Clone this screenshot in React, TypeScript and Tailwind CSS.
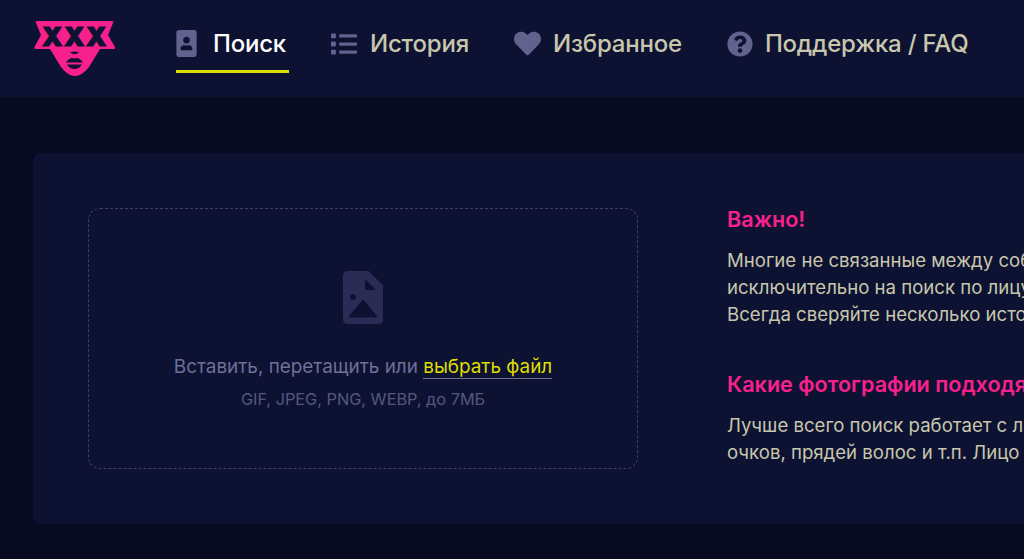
import React from 'react';
import { FaPortrait, FaList, FaHeart, FaQuestionCircle } from 'react-icons/fa';

const Logo = () => (
  <svg width="81" height="56" viewBox="0 0 81 56" className="shrink-0">
    <path
      d="M3 0H78Q80 0 79 2L74 14L81 26Q81.500 28 80 28H66L55 46Q48 55 41 55Q34 55 27 46L16 28H2Q0 28 0.500 26L7 14L2 2Q1 0 3 0Z"
      fill="#f7208c"
    />
    <text
      x="41"
      y="25"
      textAnchor="middle"
      fill="#0d1233"
      stroke="#0d1233"
      strokeWidth="1"
      fontFamily="Inter, sans-serif"
      fontWeight="900"
      fontSize="26"
      letterSpacing="1.500"
    >
      XXX
    </text>
    <path d="M36 31.500Q40.500 29.500 45 31.500Q40.500 35 36 31.500Z" fill="#0d1233" />
    <path d="M32 41.500Q36 35.500 40.500 37.500Q45 35.500 49 41.500Z" fill="#0d1233" />
    <path d="M33 43.500H48Q45 48 40.500 48Q36 48 33 43.500Z" fill="#0d1233" />
  </svg>
);

const FileIcon = () => (
  <svg width="40" height="53" viewBox="0 0 40 53" fill="#2b2b55">
    <path
      fillRule="evenodd"
      d="M5 0H25.500L40 14.500V48Q40 53 35 53H5Q0 53 0 48V5Q0 0 5 0ZM22 8V19H33ZM10 23A3 3 0 1 0 10 29A3 3 0 1 0 10 23ZM20 30L7 45.500H33Z"
    />
    <path d="M20 30L7 45.500H33Z" fill="#0d1233" stroke="#0d1233" strokeWidth="2" strokeLinejoin="round" />
  </svg>
);

const navItems = [
  { label: 'Поиск', icon: <FaPortrait size={27} className="w-[21px]" />, gap: 'gap-[16px]', active: true },
  { label: 'История', icon: <FaList size={26} />, gap: 'gap-[13px]', active: false },
  { label: 'Избранное', icon: <FaHeart size={27} />, gap: 'gap-[12px]', active: false },
  { label: 'Поддержка / FAQ', icon: <FaQuestionCircle size={26} />, gap: 'gap-[12px]', active: false },
];

const App: React.FC = () => {
  return (
    <div className="w-[1024px] h-[559px] overflow-hidden bg-[#080a22] font-['Inter',sans-serif]">
      <header className="h-[97px] bg-[#0d1233] flex items-start pl-[34px] pt-[21px]">
        <Logo />
        <nav className="flex ml-[61px] gap-[42px]">
          {navItems.map((item) => (
            <a
              key={item.label}
              className={`flex items-center h-[52px] pb-[4px] pr-[3px] border-b-[3px] text-[24px] font-medium tracking-[-0.2px] whitespace-nowrap ${item.gap} ${
                item.active ? 'border-[#dede00] text-white' : 'border-transparent text-[#c8c7ac]'
              }`}
            >
              <span className="text-[#62628e]">{item.icon}</span>
              {item.label}
            </a>
          ))}
        </nav>
      </header>

      <main className="pt-[56px] pl-[33px]">
        <section className="w-[1400px] h-[371px] rounded-lg bg-[#0d1233] p-[55px] flex gap-[89px]">
          <div className="w-[550px] h-[261px] shrink-0 rounded-xl border border-dashed border-[#3d3f68] flex flex-col items-center pt-[62px]">
            <FileIcon />
            <p className="mt-[30px] text-[18.9px] leading-[26px] text-[#6f6f98] whitespace-nowrap">
              Вставить, перетащить или{' '}
              <span className="text-[#dede00] border-b border-[#6f6f98]">выбрать файл</span>
            </p>
            <p className="mt-[9px] text-[16.3px] leading-[20px] text-[#55567f] whitespace-nowrap">
              GIF, JPEG, PNG, WEBP, до 7МБ
            </p>
          </div>

          <div className="flex-1 whitespace-nowrap text-[#c8c7ac] text-[18.6px] leading-[27px]">
            <h2 className="-mt-px text-[21.6px] leading-[24px] font-semibold text-[#f7208c]">Важно!</h2>
            <p className="mt-[16px]">
              Многие не связанные между собой
              <br />
              исключительно на поиск по лицу
              <br />
              Всегда сверяйте несколько источников
            </p>
            <h2 className="mt-[44px] text-[21.6px] leading-[24px] font-semibold text-[#f7208c]">
              Какие фотографии подходят
            </h2>
            <p className="mt-[16px]">
              Лучше всего поиск работает с лицами
              <br />
              очков, прядей волос и т.п. Лицо
            </p>
          </div>
        </section>
      </main>
    </div>
  );
};

export default App;
